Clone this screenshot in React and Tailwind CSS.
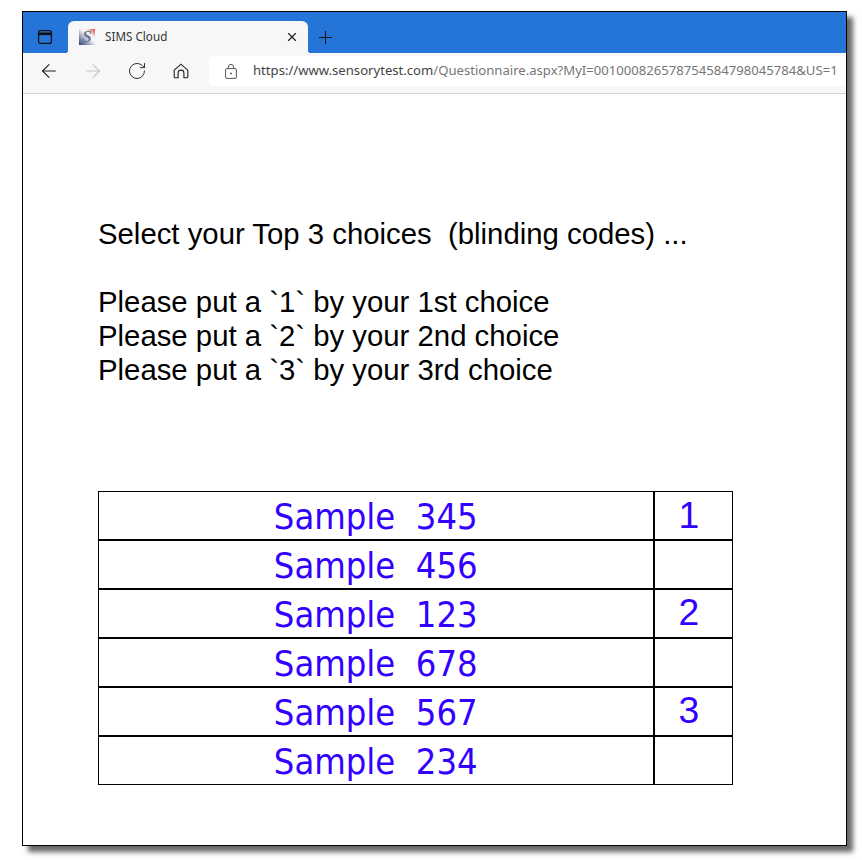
import { ArrowLeft, ArrowRight, RotateCw, X, Plus } from "lucide-react";

const rows = [
  ["345", "1"],
  ["456", ""],
  ["123", "2"],
  ["678", ""],
  ["567", "3"],
  ["234", ""],
];

function TabsIcon() {
  return (
    <svg width="16" height="16" viewBox="0 0 16 16" fill="none" stroke="#111" strokeWidth="1.3">
      <rect x="1.6" y="1.6" width="12.8" height="12.8" rx="2" />
      <path d="M1.6 4.8h12.8" strokeWidth="2.6" />
    </svg>
  );
}

function HomeIcon() {
  return (
    <svg width="16" height="16" viewBox="0 0 16 16" fill="none" stroke="#222" strokeWidth="1.1">
      <path d="M1.2 7.2 8 1.2l6.8 6v6.6a1 1 0 0 1-1 1h-2.9V10a2.9 2.9 0 0 0-5.8 0v4.8H2.2a1 1 0 0 1-1-1z" />
    </svg>
  );
}

function LockIcon() {
  return (
    <svg width="12" height="15" viewBox="0 0 12 15" fill="none" stroke="#555" strokeWidth="1">
      <rect x="0.6" y="4.6" width="10.8" height="9.8" rx="1.4" />
      <path d="M3.4 4.5V3a2.6 2.6 0 0 1 5.2 0v1.5" />
      <circle cx="6" cy="9.5" r="0.9" fill="#555" stroke="none" />
    </svg>
  );
}

function Favicon() {
  return (
    <div className="w-4 h-4 flex items-center justify-center bg-[linear-gradient(45deg,#2f3d73_0%,#8f9aba_30%,#f4f2f4_55%,#f4f2f4_70%,#e2402f_100%)]">
      <span className="font-['Liberation_Serif',serif] italic font-bold text-[17px] leading-4 text-[#6a7496]">S</span>
    </div>
  );
}

export default function App() {
  return (
    <div className="w-[862px] h-[860px] bg-white pt-[11px] pl-[22px] overflow-hidden font-['Liberation_Sans',sans-serif]">
      <div className="w-[825px] h-[835px] border border-black bg-white shadow-[6px_6px_5px_rgba(0,0,0,0.6)] flex flex-col">
        {/* title bar */}
        <div className="h-[41px] bg-[#2574d8] flex items-end shrink-0">
          <div className="w-[45px] h-[32px] flex items-center justify-center pr-[1px]">
            <TabsIcon />
          </div>
          <div className="relative w-[240px] h-[32px] bg-[#f7f7f7] rounded-t-[6px] flex items-center pl-[11px] pr-[9px]">
            <Favicon />
            <span className="ml-[10px] text-[11.7px] text-[#333] font-['Noto_Sans',sans-serif]">SIMS Cloud</span>
            <X className="ml-auto" size={14} strokeWidth={2} color="#222" />
            <div className="absolute -left-[2px] bottom-0 w-[2px] h-[2px] bg-[radial-gradient(circle_at_0_0,#2574d8_2px,#f7f7f7_2px)]"></div>
            <div className="absolute -right-[2px] bottom-0 w-[2px] h-[2px] bg-[radial-gradient(circle_at_100%_0,#2574d8_2px,#f7f7f7_2px)]"></div>
          </div>
          <div className="w-[35px] h-[32px] flex items-center justify-center">
            <Plus size={21} strokeWidth={1.1} color="#111" />
          </div>
        </div>
        {/* toolbar */}
        <div className="h-[41px] bg-[#f7f7f7] border-b border-[#d2d2d2] flex items-center shrink-0 pb-[4px]">
          <div className="w-[186px] flex items-center pl-[15px]">
            <ArrowLeft size={22} strokeWidth={1.2} color="#222" />
            <ArrowRight className="ml-[22px]" size={22} strokeWidth={1.2} color="#c4c4c4" />
            <RotateCw className="ml-[23px]" size={20} strokeWidth={1.2} color="#333" />
            <div className="ml-[26px]"><HomeIcon /></div>
          </div>
          <div className="flex-1 h-[30px] bg-white rounded-l-[5px] flex items-center pl-[16px]">
            <LockIcon />
            <span className="ml-[16px] text-[13.11px] whitespace-nowrap text-[#767676] font-['Noto_Sans',sans-serif]">
              <span className="text-[#444]">https://www.sensorytest.com</span>/Questionnaire.aspx?MyI=001000826578754584798045784&amp;US=1
            </span>
          </div>
        </div>
        {/* page */}
        <div className="pl-[75px] pt-[123px] text-black">
          <div className="text-[29.33px] leading-[34px] whitespace-pre">
            <p>Select your Top 3 choices  (blinding codes) ...</p>
            <p>&nbsp;</p>
            <p>Please put a `1` by your 1st choice</p>
            <p>Please put a `2` by your 2nd choice</p>
            <p>Please put a `3` by your 3rd choice</p>
          </div>
          <table className="mt-[104px] w-[635px] table-fixed border-collapse border border-black">
            <tbody>
              {rows.map(([code, rank]) => (
                <tr key={code} className="h-[49px] first:h-[48px] border-t-2 first:border-t-0 border-black">
                  <td className="border-r-2 border-black text-center text-[36px] leading-none text-[#3300ff] whitespace-pre font-['DejaVu_Sans',sans-serif] font-stretch-condensed pt-[3px]">
                    Sample  {code}
                  </td>
                  <td className="w-[79px] text-center text-[37.3px] leading-none text-[#3300ff] pr-[9px]">
                    {rank}
                  </td>
                </tr>
              ))}
            </tbody>
          </table>
        </div>
      </div>
    </div>
  );
}
